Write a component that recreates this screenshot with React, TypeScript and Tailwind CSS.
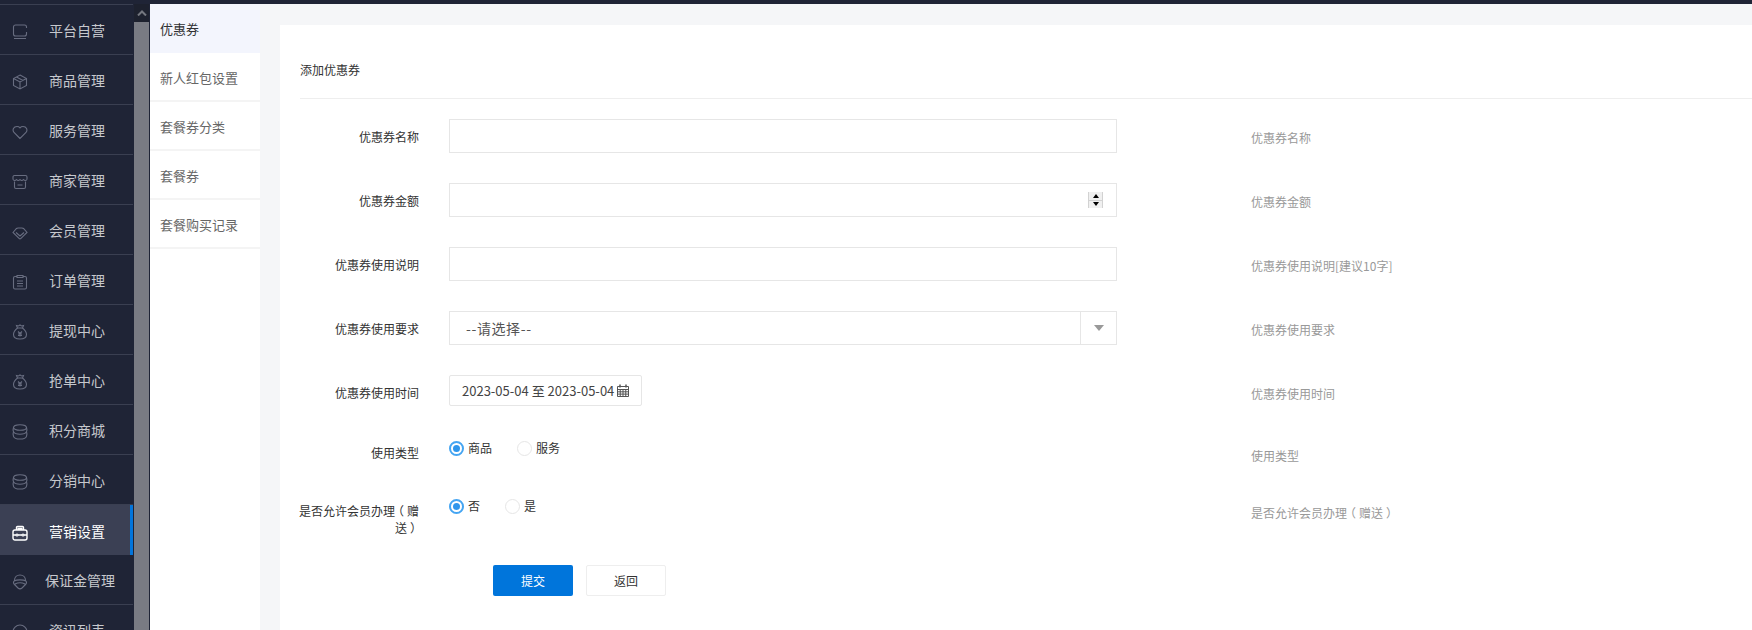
import React from 'react';

interface NavItem {
    label: string;
    icon: React.ReactNode;
    active?: boolean;
    textClass?: string;
}

const Icon: React.FC<{ children: React.ReactNode; className?: string }> = ({ children, className = 'text-[#686d80]' }) => (
    <svg viewBox="0 0 16 16" fill="none" stroke="currentColor" strokeWidth="1.100" className={`ml-3 mt-[2px] h-4 w-4 shrink-0 ${className}`}>
        {children}
    </svg>
);

const bagIcon = (
    <Icon>
        <path d="M5.5 4C3 6 1.5 8 1.5 10.5 1.5 13.5 4 15 8 15s6.500-1.500 6.500-4.500C14.500 8 13 6 10.500 4l1-2.500-2 .5L8 1 6.500 2l-2-.5z" />
        <path d="M5.500 4h5M6 7.500l2 2 2-2M8 9.500v3M6 10h4M6 11.500h4" />
    </Icon>
);

const stackIcon = (
    <Icon>
        <ellipse cx="8" cy="3.500" rx="6.500" ry="2.800" />
        <path d="M1.500 3.500C1 5 1 6.500 1.500 7.700 1 9 1 11 1.500 12.300 2 14 5 15 8 15s6-1 6.500-2.700c.5-1.300.5-3.300 0-4.600.5-1.200.5-2.700 0-4.200" />
        <path d="M1.500 7.700C2.500 9.500 5 10.200 8 10.200s5.500-.7 6.500-2.500" />
    </Icon>
);

const navItems: NavItem[] = [
    {
        label: '平台自营',
        icon: (
            <Icon>
                <path d="M14.500 4V3A2 2 0 0 0 12.500 1h-9A2 2 0 0 0 1.500 3v7A2 2 0 0 0 3.500 12h9a2 2 0 0 0 2-2V8M2 14.500h12" />
            </Icon>
        )
    },
    {
        label: '商品管理',
        icon: (
            <Icon>
                <path d="M8 1l6.500 3.500v7L8 15l-6.500-3.500v-7zM1.500 4.500L8 8l6.500-3.500M8 8v7M4.500 3l6.500 3.500" />
            </Icon>
        )
    },
    {
        label: '服务管理',
        icon: (
            <Icon>
                <path d="M8 14.500L2 8.500C0 6 1.500 2.500 5 2.500c1.500 0 2.500.7 3 1.300.5-.6 1.500-1.300 3-1.300 3.500 0 5 3.500 3 6z" />
            </Icon>
        )
    },
    {
        label: '商家管理',
        icon: (
            <Icon>
                <path d="M1 5.500V3A1.500 1.500 0 0 1 2.500 1.500h11A1.500 1.500 0 0 1 15 3v2.500" />
                <path d="M1 5.500q1.750 2 3.500 0q1.750 2 3.500 0q1.750 2 3.500 0q1.750 2 3.500 0" />
                <path d="M2.500 7.500V13A1.500 1.500 0 0 0 4 14.500h8A1.500 1.500 0 0 0 13.500 13V7.500M5.500 11h5" />
            </Icon>
        )
    },
    {
        label: '会员管理',
        icon: (
            <Icon>
                <path d="M1 8.500L4.500 4.500Q5 4 6 4h4q1 0 1.500.5L15 8.500 8.700 14.600q-.7.6-1.400 0zM4 8.500L8 12l4-3.500" />
            </Icon>
        )
    },
    {
        label: '订单管理',
        icon: (
            <Icon>
                <path d="M5 2.500H3A1.500 1.500 0 0 0 1.500 4v9.500A1.500 1.500 0 0 0 3 15h10a1.500 1.500 0 0 0 1.500-1.500V4A1.500 1.500 0 0 0 13 2.500h-2" />
                <path d="M5 1.500h6v2H5zM5 7h6M5 9.500h6M5 12h6" />
            </Icon>
        )
    },
    { label: '提现中心', icon: bagIcon },
    { label: '抢单中心', icon: bagIcon },
    { label: '积分商城', icon: stackIcon },
    { label: '分销中心', icon: stackIcon },
    {
        label: '营销设置',
        active: true,
        icon: (
            <Icon className="text-white">
                <path strokeWidth="1.400" d="M3 5h10a2 2 0 0 1 2 2v6a2 2 0 0 1-2 2H3a2 2 0 0 1-2-2V7a2 2 0 0 1 2-2zM4.500 5V2.500a1 1 0 0 1 1-1h5a1 1 0 0 1 1 1V5M5.500 3.500h5M1 10h3M6 10h4M12 10h3" />
                <circle cx="5" cy="10" r="1" />
                <circle cx="11" cy="10" r="1" />
            </Icon>
        )
    },
    {
        label: '保证金管理',
        textClass: '-ml-1',
        icon: (
            <Icon>
                <path d="M2.500 6.500C2.500 3 5 1 8 1s5.500 2 5.500 5.500M2 7c3-1.500 9-1.500 12 0M2 7c-1 1.500-.5 2.500.5 3.500L6 14c1.200 1 2.800 1 4 0l3.500-3.500c1-1 1.500-2 .5-3.500M3 10c3-1.500 7-1.500 10 0" />
            </Icon>
        )
    },
    {
        label: '资讯列表',
        icon: (
            <Icon>
                <circle cx="8" cy="8" r="7" />
                <path d="M4 7h8" />
            </Icon>
        )
    }
];

const subMenu = ['优惠券', '新人红包设置', '套餐券分类', '套餐券', '套餐购买记录'];

const Sidebar: React.FC = () => (
    <aside className="flex w-[150px] shrink-0 bg-[#1f2436]">
        <nav className="w-[133px] border-t border-[#3a3f51]">
            {navItems.map(item => (
                <div
                    key={item.label}
                    className={`flex h-[50px] items-center pt-px text-sm ${
                        item.active
                            ? 'border-r-[3px] border-[#0275dc] bg-[#3b4054] text-white'
                            : 'border-b border-[#3a3f51] text-[#c6c8cd]'
                    }`}
                >
                    <div className="flex w-[49px] shrink-0 pt-[2px]">{item.icon}</div>
                    <span className={`whitespace-nowrap ${item.textClass ?? ''}`}>{item.label}</span>
                </div>
            ))}
        </nav>
        <div className="ml-px flex w-[15px] flex-col">
            <div className="flex h-[18px] items-center justify-center bg-[#1d212e]">
                <svg viewBox="0 0 10 6" className="h-[6px] w-[10px]" fill="none" stroke="#74777f" strokeWidth="2">
                    <path d="M1 5.500L5 1.500 9 5.500" />
                </svg>
            </div>
            <div className="flex-1 bg-[#797b83]" />
        </div>
        <div className="w-px" />
    </aside>
);

const SubNav: React.FC = () => (
    <div className="w-[110px] shrink-0 bg-white text-[13px] text-[#666]">
        {subMenu.map((name, index) => (
            <div
                key={name}
                className={`flex h-[49px] items-center border-b-2 pl-[10px] pt-[2px] ${
                    index === 0 ? 'border-[#f3f5fd] bg-[#f3f5fd] text-[#303133]' : 'border-[#f4f4f4]'
                }`}
            >
                {name}
            </div>
        ))}
    </div>
);

interface RowProps {
    label: React.ReactNode;
    help: React.ReactNode;
    children: React.ReactNode;
    rowClass?: string;
    labelClass?: string;
    helpClass?: string;
}

const Row: React.FC<RowProps> = ({ label, help, children, rowClass = 'h-[34px] mb-[30px]', labelClass = '', helpClass = 'pt-1' }) => (
    <div className={`-ml-px flex items-center ${rowClass}`}>
        <label className={`w-[120px] shrink-0 text-right leading-[17px] text-[#333] ${labelClass}`}>{label}</label>
        <div className="ml-[30px] flex h-full w-[668px] shrink-0 items-center">{children}</div>
        <div className={`ml-[134px] whitespace-nowrap text-[#999] ${helpClass}`}>{help}</div>
    </div>
);

const TextBox: React.FC = () => (
    <input type="text" className="h-full w-full border border-[#e6e6e6] bg-white px-3 outline-none" />
);

const Radio: React.FC<{ label: string; checked?: boolean }> = ({ label, checked }) => (
    <span className="mr-[25px] flex items-center text-[#333]">
        <span
            className={`mr-1 flex h-[15px] w-[15px] items-center justify-center rounded-full border ${
                checked ? 'border-2 border-[#45a5f2]' : 'border-[#e6e6e6]'
            }`}
        >
            {checked && <span className="h-[7px] w-[7px] rounded-full bg-[#2f96ec]" />}
        </span>
        <span className="-mt-px">{label}</span>
    </span>
);

// the parens sit mid-cell in the original font
const GiftLabel: React.FC<{ split?: boolean }> = ({ split }) => (
    <span className="whitespace-nowrap">
        是否允许会员办理<span className="relative -left-[3px]">（</span>赠{split && <br />}送<span className="relative left-[3px]">）</span>
    </span>
);

const CouponForm: React.FC = () => (
    <div className="ml-5 mt-[21px] flex-1 bg-white pl-5 text-xs">
        <div className="flex h-[74px] items-end border-b border-[#eee] pb-5 leading-[17px] text-[#333]">添加优惠券</div>
        <form className="pt-5">
            <Row label="优惠券名称" help="优惠券名称">
                <TextBox />
            </Row>
            <Row label="优惠券金额" help="优惠券金额">
                <div className="flex h-full w-full items-center justify-end border border-[#e6e6e6] pr-[13px]">
                    <div className="flex h-4 w-[15px] flex-col gap-px bg-[#d2d2d2] px-px">
                        <span className="flex flex-1 items-center justify-center bg-[#f0f0f0]">
                            <span className="h-0 w-0 border-x-[3.5px] border-b-[4px] border-x-transparent border-b-black" />
                        </span>
                        <span className="flex flex-1 items-center justify-center bg-[#f0f0f0]">
                            <span className="h-0 w-0 border-x-[3.5px] border-t-[4px] border-x-transparent border-t-black" />
                        </span>
                    </div>
                </div>
            </Row>
            <Row label="优惠券使用说明" help="优惠券使用说明[建议10字]">
                <TextBox />
            </Row>
            <Row label="优惠券使用要求" help="优惠券使用要求">
                <div className="flex h-full w-full items-center border border-[#e6e6e6]">
                    <span className="flex-1 pl-[16px] text-sm tracking-[0.6px] text-[#555]">--请选择--</span>
                    <span className="flex h-full w-[36px] items-center justify-center border-l border-[#e6e6e6]">
                        <span className="h-0 w-0 border-x-[5px] border-t-[6px] border-x-transparent border-t-[#999]" />
                    </span>
                </div>
            </Row>
            <Row label="优惠券使用时间" help="优惠券使用时间" rowClass="h-[31px]" labelClass="pt-[3px]" helpClass="pt-[7px]">
                <div className="flex h-full w-[193px] items-center rounded-[2px] border border-[#e6e6e6] pl-3 text-[13px] text-[#444]">
                    <span className="whitespace-nowrap">2023-05-04 至 2023-05-04</span>
                    <svg viewBox="0 0 12 13" className="ml-[3px] h-[13px] w-3 text-[#555]" fill="none" stroke="currentColor" strokeWidth="1">
                        <path d="M.5 2.500h11v10H.5zM.5 5.500h11M.5 7.800h11M.5 10.100h11M3.250 5.500v7M6 5.500v7M8.750 5.500v7" />
                        <path strokeWidth="1.500" d="M3 .5v3M9 .5v3" />
                    </svg>
                </div>
            </Row>
            <Row label="使用类型" help="使用类型" rowClass="mt-[34px] h-4" labelClass="pt-2" helpClass="pt-4">
                <Radio label="商品" checked />
                <Radio label="服务" />
            </Row>
            <Row label={<GiftLabel split />} help={<GiftLabel />} rowClass="mt-[42px] h-4" labelClass="pt-[25px]" helpClass="pt-[14px]">
                <Radio label="否" checked />
                <Radio label="是" />
            </Row>
            <div className="ml-[193px] mt-[51px] flex gap-[13px]">
                <button type="button" className="h-[31px] w-20 rounded-[2px] bg-[#0075db] text-white">提交</button>
                <button type="button" className="h-[31px] w-20 rounded-[2px] border border-[#eee] bg-white text-[#333]">返回</button>
            </div>
        </form>
    </div>
);

const App: React.FC = () => (
    <div className="flex h-[630px] w-[1752px] flex-col overflow-hidden bg-[#f5f6f8] font-['Noto_Sans_CJK_SC','Noto_Sans',sans-serif]">
        <div className="h-1 shrink-0 bg-[#1f2436]" />
        <div className="flex min-h-0 flex-1">
            <Sidebar />
            <SubNav />
            <CouponForm />
        </div>
    </div>
);

export default App;
